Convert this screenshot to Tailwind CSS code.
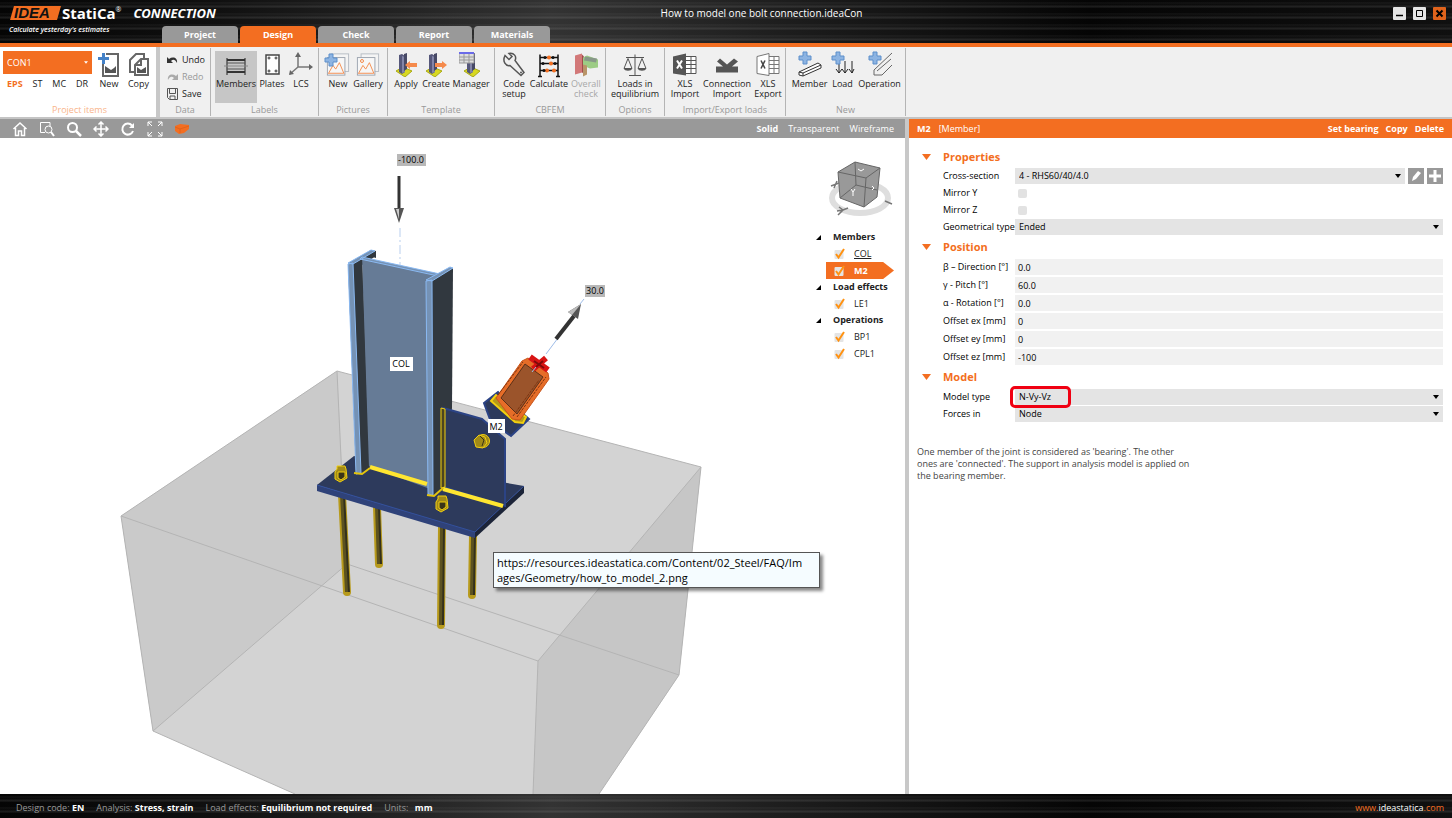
<!DOCTYPE html>
<html lang="en">
<head>
	<meta charset="UTF-8">
	<meta name="viewport" content="width=device-width, initial-scale=1.0">
	<title>How to model one bolt connection.ideaCon</title>
	<script src="https://cdn.jsdelivr.net/npm/@tailwindcss/browser@4"></script>
</head>
<body class="min-h-screen flex flex-col bg-white font-['Open_Sans','Noto_Sans',sans-serif] text-[9px] leading-3 text-[#222]">

<!-- shared icons -->
<svg class="hidden">
	<symbol id="plus" viewBox="0 0 14 14"><path d="M5 1h4v4h4v4H9v4H5V9H1V5h4z" fill="#8db4e2" stroke="#5c8fcb"/></symbol>
	<symbol id="tick" viewBox="0 0 12 12"><rect x="0.5" y="2" width="9" height="9" rx="1" fill="#e4e4e4"/><path d="M2 6l2.500 3.500L10 1" fill="none" stroke="#ff9212" stroke-width="2"/></symbol>
	<symbol id="caret" viewBox="0 0 6 4"><path d="M0 0h6L3 4z"/></symbol>
	<symbol id="column" viewBox="0 0 24 24"><path d="M2 18l7-4 9 4-7 6z" fill="#d8d820" stroke="#a8a818"/><path d="M5 2l3-1 3 2v16l-3 2-3-2z" fill="#55577a"/><path d="M8 3l3 1v15l-3 1z" fill="#8385a8"/><path d="M10 1l3-1v16l-3 2z" fill="#474966"/></symbol>
	<symbol id="picture" viewBox="0 0 26 26"><rect x="5.500" y="1.500" width="19" height="19" fill="#f4f4f4" stroke="#b4bac2"/><rect x="1.500" y="5.500" width="19" height="19" fill="#f7f7f7" stroke="#9aa2ae"/><path d="M2.500 23l5-9 3 4 4-7 5 12M3 22.500h16" fill="none" stroke="#f48a4a"/></symbol>
</svg>

<header class="h-[47px] shrink-0 flex border-b-4 border-[#f36e21] text-white bg-[#0c0c0c] bg-[repeating-linear-gradient(180deg,#0000_0px,#0000_2px,#ffffff12_3px,#0000_4px,#ffffff1c_7px,#0000_8px,#0000_11px),linear-gradient(90deg,#050505,#101010_15%,#333_38%,#1c1c1c_55%,#050505_75%,#101010)]">
	<div class="w-[162px] shrink-0 pl-[9px] pt-1">
		<div class="flex items-center h-[18px] whitespace-nowrap">
			<svg class="w-[53px] h-[18px] shrink-0" viewBox="0 0 53 18">
				<path d="M5 2h47l-4 14H1z" fill="#f36e21"/>
				<text x="5" y="14" font-family="Liberation Sans" font-size="15" font-weight="bold" font-style="italic" fill="#111">IDEA</text>
			</svg>
			<span class="text-[15px] font-bold">StatiCa</span><sup class="text-[7px]">®</sup>
			<span class="ml-3 text-[13px] font-bold italic">CONNECTION</span>
		</div>
		<div class="mt-0.5 text-[7px] font-semibold italic whitespace-nowrap">Calculate yesterday's estimates</div>
	</div>
	<div class="flex-1 flex flex-col">
		<div class="h-[26px] flex items-center pr-[6px]">
			<h1 class="flex-1 pr-8 text-center text-[10px]">How to model one bolt connection.ideaCon</h1>
			<div class="flex gap-[7px]">
				<button aria-label="Minimize" class="size-[13px] rounded-[1px] bg-[#e6e6e6]"><svg viewBox="0 0 13 13"><path d="M3 8.500h7" stroke="#000" stroke-width="1.500"/></svg></button>
				<button aria-label="Maximize" class="size-[13px] rounded-[1px] bg-[#e6e6e6]"><svg viewBox="0 0 13 13"><path d="M3.500 3.500h6v6h-6z" fill="none" stroke="#000"/></svg></button>
				<button aria-label="Close" class="size-[13px] rounded-[1px] bg-[#e0631c]"><svg viewBox="0 0 13 13"><path d="M3.500 3.500l6 6m0-6l-6 6" stroke="#000" stroke-width="2"/></svg></button>
			</div>
		</div>
		<nav class="flex gap-[2px] h-[17px] font-bold">
			<button class="w-[76px] rounded-t bg-[#999]">Project</button>
			<button class="w-[76px] rounded-t bg-[#f36e21]">Design</button>
			<button class="w-[76px] rounded-t bg-[#999]">Check</button>
			<button class="w-[76px] rounded-t bg-[#999]">Report</button>
			<button class="w-[76px] rounded-t bg-[#999]">Materials</button>
		</nav>
	</div>
</header>

<div class="h-[72px] shrink-0 flex bg-[#f0f0f0] border-b-2 border-[#c4c4c4] text-center">
	<!-- project items -->
	<section class="w-[160px] flex flex-col justify-between bg-white border-r-4 border-[#c8c8c8] pl-[3px] pt-1">
		<div class="flex">
			<div class="w-[89px]">
				<div class="relative">
					<select aria-label="Project item" class="appearance-none w-full h-[23px] pl-1 bg-[#f36e21] text-white"><option>CON1</option></select>
					<svg class="absolute right-1 top-2.5 w-1 h-[3px] fill-white pointer-events-none"><use href="#caret"/></svg>
				</div>
				<div class="flex justify-between pl-1 pr-1 mt-1">
					<button class="font-bold text-[#f36e21]">EPS</button><button>ST</button><button>MC</button><button>DR</button>
				</div>
			</div>
			<button class="w-[32px] flex flex-col items-center ml-px">
				<svg class="w-6 h-[27px]" viewBox="0 0 24 25"><path d="M9 2h12v22H6V12" fill="#fff" stroke="#666" stroke-width="2"/><path d="M8 14l3 2 3 2 3-2 2-2v7H8z" fill="#555"/><path d="M5 1h3v4h4v3H8v4H5V8H1V5h4z" fill="#4482c8"/></svg>
				New
			</button>
			<button class="w-[27px] flex flex-col items-center">
				<svg class="w-6 h-[27px]" viewBox="0 0 24 25"><path d="M3 8l6-6h8v18H3z" fill="#fff" stroke="#666" stroke-width="2"/><path d="M8 13l6-6h7v16H8z" fill="#fff" stroke="#666" stroke-width="2"/><path d="M14 7v6H8" fill="none" stroke="#666" stroke-width="2"/><path d="M10 15l4 3 5-3v6h-9z" fill="#555"/></svg>
				Copy
			</button>
		</div>
		<h2 class="text-[#f9b58c] pb-px">Project items</h2>
	</section>
	<section class="w-[51px] my-px flex flex-col justify-between border-r border-[#b4b4b4] pt-1.5">
		<div class="flex flex-col gap-[5px] pl-[7px]">
			<button class="flex items-center gap-[4px]"><svg class="w-[11px] h-3" viewBox="0 0 11 12"><path d="M0 3v6h6L4 7c2-2 4-2 6 2 1-5-4-7-8-4z" fill="#333"/></svg>Undo</button>
			<button disabled class="flex items-center gap-[4px] text-[#999]"><svg class="w-[11px] h-3" viewBox="0 0 11 12"><path d="M11 3v6H5l2-2C5 5 3 5 1 9 0 4 5 2 9 5z" fill="#aaa"/></svg>Redo</button>
			<button class="flex items-center gap-[4px]"><svg class="w-[11px] h-3" viewBox="0 0 11 12"><path d="M.5.5h10v11h-8l-2-2zM2.500.5v5h6v-5M3 11V8h5v3" fill="none" stroke="#555"/></svg>Save</button>
		</div>
		<h2 class="text-[#999]">Data</h2>
	</section>
	<section class="w-[108px] my-px flex flex-col justify-between border-r border-[#b4b4b4] pt-[3px]">
		<div class="flex pl-1">
			<button class="w-[42px] h-[52px] flex flex-col items-center bg-[#c6c6c6]">
				<svg class="w-6 h-[27px]" viewBox="0 0 24 27"><path d="M3 7v17M21 7v17" stroke="#555" stroke-width="1.500"/><path d="M3 9h18M3 21h18" stroke="#333" stroke-width="2"/><path d="M3 12h18M3 18h18" stroke="#555"/><path d="M0 15h24" stroke="#888"/></svg>
				Members
			</button>
			<button class="w-[30px] flex flex-col items-center">
				<svg class="w-6 h-[27px]" viewBox="0 0 24 27"><rect x="6" y="4" width="13" height="19" fill="#fff" stroke="#444" stroke-width="1.500"/><g fill="none" stroke="#333"><circle cx="9" cy="7" r="1"/><circle cx="16" cy="7" r="1"/><circle cx="9" cy="20" r="1"/><circle cx="16" cy="20" r="1"/></g></svg>
				Plates
			</button>
			<button class="w-[28px] flex flex-col items-center">
				<svg class="w-6 h-[27px]" viewBox="0 0 24 27"><path d="M9 3v13h13M9 16l-8 7" fill="none" stroke="#777" stroke-width="1.500"/><path d="M6 6l3-5 3 5zM20 13l4 3-4 3zM0 24l1-5 4 4z" fill="#666"/></svg>
				LCS
			</button>
		</div>
		<h2 class="text-[#999]">Labels</h2>
	</section>
	<section class="w-[69px] my-px flex flex-col justify-between border-r border-[#b4b4b4] pt-[3px]">
		<div class="flex justify-center">
			<button class="w-[30px] flex flex-col items-center"><span class="relative h-[27px]"><svg class="w-6 h-[27px]"><use href="#picture"/></svg><svg class="absolute -left-0.5 top-0.5 size-[14px]"><use href="#plus"/></svg></span>New</button>
			<button class="w-[30px] flex flex-col items-center"><svg class="w-6 h-[27px]"><use href="#picture"/><circle cx="6" cy="10" r="1.500" fill="none" stroke="#f48a4a"/></svg>Gallery</button>
		</div>
		<h2 class="text-[#999]">Pictures</h2>
	</section>
	<section class="w-[107px] my-px flex flex-col justify-between border-r border-[#b4b4b4] pt-[3px]">
		<div class="flex justify-center">
			<button class="w-[30px] flex flex-col items-center"><svg class="w-6 h-[27px]" viewBox="0 0 24 27"><use href="#column" y="2" width="24" height="24"/><path d="M11 14l5-4v2h7v4h-7v2z" fill="#f58a4c"/></svg>Apply</button>
			<button class="w-[30px] flex flex-col items-center"><svg class="w-6 h-[27px]" viewBox="0 0 24 27"><use href="#column" y="2" width="24" height="24"/><path d="M23 14l-5-4v2h-7v4h7v2z" fill="#f58a4c"/></svg>Create</button>
			<button class="w-[40px] flex flex-col items-center"><svg class="w-6 h-[27px]" viewBox="0 0 24 27"><use href="#column" x="3" y="2" width="24" height="24"/><path d="M0 2h15v10H0z" fill="#ddd" stroke="#999"/><path d="M5 2v10M10 2v10M0 6h15M0 9h15" stroke="#999"/><path d="M0 2h15" stroke="#6a6ae8" stroke-width="2"/></svg>Manager</button>
		</div>
		<h2 class="text-[#999]">Template</h2>
	</section>
	<section class="w-[111px] my-px flex flex-col justify-between border-r border-[#b4b4b4] pt-[3px]">
		<div class="flex justify-center pl-0.5 leading-[10px]">
			<button class="w-[32px] flex flex-col items-center"><svg class="w-6 h-[28px]" viewBox="0 0 24 27"><path d="M3 4l4 4 3-3-3-3c5-1 8 3 6 7l9 12-3 3L8 14c-4 1-8-4-5-10z" fill="none" stroke="#555" stroke-width="1.500"/><circle cx="19" cy="21" r="1" fill="#555"/></svg>Code<br>setup</button>
			<button class="w-[38px] flex flex-col items-center"><svg class="w-6 h-[28px]" viewBox="0 0 24 27"><path d="M3 3v22M21 3v22M1 25h4M19 25h4M3 6h18M3 12h18M3 19h18" fill="none" stroke="#111" stroke-width="1.500"/><g fill="#f36e21"><circle cx="12" cy="6" r="2"/><circle cx="14" cy="12" r="2"/><circle cx="10" cy="19" r="2"/><circle cx="17" cy="19" r="2"/></g><g fill="#111"><circle cx="8" cy="6" r="1.500"/><circle cx="16" cy="6" r="1.500"/><circle cx="6" cy="12" r="1.500"/><circle cx="18" cy="12" r="1.500"/><circle cx="7" cy="19" r="1.500"/></g></svg>Calculate</button>
			<button disabled class="w-[36px] flex flex-col items-center text-[#a8a8a8]"><svg class="w-6 h-[28px]" viewBox="0 0 24 27"><path d="M1 4l7-2v19l-7 2z" fill="#d27878"/><path d="M8 3l2 2v17l-2-1z" fill="#a04c4c"/><path d="M9 6l4-2 11 4v8l-8 1-7-3z" fill="#9ccc84"/><path d="M11 5l12 2-1 4-12-2z" fill="#889888"/><path d="M9 13l4 1v9l-4 2z" fill="#b89468"/></svg>Overall<br>check</button>
		</div>
		<h2 class="text-[#999]">CBFEM</h2>
	</section>
	<section class="w-[59px] my-px flex flex-col justify-between border-r border-[#b4b4b4] pt-[3px]">
		<div class="flex justify-center leading-[10px]">
			<button class="flex flex-col items-center"><svg class="w-6 h-[28px]" viewBox="0 0 24 27"><path d="M12 3v21M3 6h18M6 24h12M5 7L1 17h8zM19 7l-4 10h8z" fill="none" stroke="#555"/><path d="M1 17h8c0 3-8 3-8 0zM15 17h8c0 3-8 3-8 0z" fill="#555"/></svg>Loads in<br>equilibrium</button>
		</div>
		<h2 class="text-[#999]">Options</h2>
	</section>
	<section class="w-[121px] my-px flex flex-col justify-between border-r border-[#b4b4b4] pt-[3px]">
		<div class="flex justify-center pl-0.5 leading-[10px]">
			<button class="w-[30px] flex flex-col items-center"><svg class="w-6 h-[28px]" viewBox="0 0 24 27"><path d="M13 5h10v17H13M18 5v17M13 9h10M13 13h10M13 17h10" fill="#fff" stroke="#555"/><path d="M0 5l13-3v22L0 22z" fill="#555"/><path d="M4 9l5 8M9 9l-5 8" stroke="#fff" stroke-width="2"/></svg>XLS<br>Import</button>
			<button class="w-[54px] flex flex-col items-center"><svg class="w-6 h-[28px]" viewBox="0 0 24 27"><path d="M1 21v-6h7L2 10l3-3 7 6 7-6 4 3-6 5h6v6z" fill="#555"/></svg>Connection<br>Import</button>
			<button class="w-[28px] flex flex-col items-center"><svg class="w-6 h-[28px]" viewBox="0 0 24 27"><path d="M13 5h10v17H13M18 5v17M13 9h10M13 13h10M13 17h10" fill="#fff" stroke="#777"/><path d="M1 5l12-3v22L1 22z" fill="#fff" stroke="#777"/><path d="M5 9l4 8M9 9l-4 8" stroke="#444" stroke-width="1.500"/></svg>XLS<br>Export</button>
		</div>
		<h2 class="text-[#999]">Import/Export loads</h2>
	</section>
	<section class="w-[120px] my-px flex flex-col justify-between border-r border-[#b4b4b4] pt-[3px]">
		<div class="flex justify-center pl-0.5">
			<button class="w-[36px] flex flex-col items-center"><svg class="w-6 h-[27px]" viewBox="0 0 24 27"><path d="M1 21l19-9 3 2v3L5 25l-4-1zM1 21l4 1v3M5 22l18-8" fill="#fff" stroke="#333"/><use href="#plus" width="14" height="14"/></svg>Member</button>
			<button class="w-[30px] flex flex-col items-center"><svg class="w-6 h-[27px]" viewBox="0 0 24 27"><path d="M8 10v12M14 10v12M21 10v12M5 18l3 4 3-4M11 18l3 4 3-4M18 18l3 4 2-4" fill="none" stroke="#222"/><use href="#plus" width="14" height="14"/></svg>Load</button>
			<button class="w-[44px] flex flex-col items-center"><svg class="w-6 h-[27px]" viewBox="0 0 24 27"><path d="M24 2L6 19v5h8L24 14M23 8L9 20" fill="none" stroke="#666"/><use href="#plus" width="14" height="14"/></svg>Operation</button>
		</div>
		<h2 class="text-[#999]">New</h2>
	</section>
</div>

<main class="flex-1 flex">
	<div class="flex-[905] min-w-0 flex flex-col">
		<div class="h-[19px] flex items-center justify-between bg-[#999] text-white pl-3 pr-[11px]">
			<div class="flex gap-[11px]">
				<button aria-label="Home"><svg class="size-4" viewBox="0 0 16 16"><path d="M1.500 8L8 2l6.500 6M3.500 7v7.500h3V10h3v4.500h3V7" fill="none" stroke="#fff" stroke-width="1.500"/></svg></button>
				<button aria-label="Zoom window"><svg class="size-4" viewBox="0 0 16 16"><path d="M11 5V1.500H1.500v10H6" fill="none" stroke="#fff"/><circle cx="9.500" cy="8.500" r="3.500" fill="none" stroke="#fff"/><path d="M12 11l3 4" stroke="#fff" stroke-width="2"/></svg></button>
				<button aria-label="Zoom"><svg class="size-4" viewBox="0 0 16 16"><circle cx="6.500" cy="6.500" r="4.500" fill="none" stroke="#fff" stroke-width="2"/><path d="M10 10l5 5" stroke="#fff" stroke-width="2.500"/></svg></button>
				<button aria-label="Pan"><svg class="size-4" viewBox="0 0 16 16"><path d="M8 1v14M1 8h14M5.500 3.500L8 1l2.500 2.500M5.500 12.500L8 15l2.500-2.500M3.500 5.500L1 8l2.500 2.500M12.500 5.500L15 8l-2.500 2.500" fill="none" stroke="#fff" stroke-width="1.500"/></svg></button>
				<button aria-label="Rotate"><svg class="size-4" viewBox="0 0 16 16"><path d="M12 4.500A5.500 5.500 0 1 0 13 10" fill="none" stroke="#fff" stroke-width="2"/><path d="M14 2v5H9z" fill="#fff"/></svg></button>
				<button aria-label="Fit all"><svg class="size-4" viewBox="0 0 16 16"><path d="M1 5V1h4M1 1l4 4M11 1h4v4M15 1l-4 4M1 11v4h4M1 15l4-4M15 11v4h-4M15 15l-4-4" fill="none" stroke="#fff"/></svg></button>
				<button aria-label="Solid view"><svg class="size-4" viewBox="0 0 16 16"><path d="M1 5l5-2 9 1v4l-5 4-5 1-4-3z" fill="#f36e21"/><path d="M1 6l5 2 9-3M6 8v4" fill="none" stroke="#e0631c"/></svg></button>
			</div>
			<div class="flex gap-[10px]">
				<button class="font-bold">Solid</button><button>Transparent</button><button>Wireframe</button>
			</div>
		</div>
		<div class="relative flex-1 overflow-hidden">
			<!-- 3D scene -->
			<svg class="block w-full" viewBox="0 138 905 656" font-family="Open Sans, Noto Sans, sans-serif" font-size="9">
				<path d="M121 516L337 371 701 467 679 675 599 794H295L153 731z" fill="#d3d3d3"/>
				<path d="M121 516L337 371 347 564 153 731z" fill="#cacaca"/>
				<path d="M701 467L538 661 533 794h66l80-119z" fill="#c6c6c6"/>
				<path d="M121 516L337 371 701 467 538 661zM121 516L153 731 295 794M153 731L347 564 679 675M342 480L337 371M701 467L679 675 599 794M538 661L533 794" fill="none" stroke="#b4b4b4"/>
				<g stroke="#b79a1c" stroke-width="8" stroke-linecap="round"><path d="M342 494l5 98M377 507l2 57M442 527l-1 98M473 535l-1 60"/></g>
				<g stroke="#5c5220" stroke-width="4"><path d="M342 494l5 98M377 507l2 57M442 527l-1 98M473 535l-1 60"/></g>
				<g stroke="#33301c" stroke-width="2"><path d="M344 494l5 98M379 507l2 57M444 527l-1 98M475 535l-1 60"/></g>
				<!-- base plate -->
				<path d="M317 485L354 456 524 486 475 533z" fill="#2d3a5c"/>
				<path d="M317 485v6l158 47v-6z" fill="#2f4279"/>
				<path d="M524 486v7l-49 45v-6z" fill="#1c2438"/>
				<path d="M317 485l158 47 49-46" fill="none" stroke="#33509c"/>
				<!-- column -->
				<path d="M400 228v40" stroke="#b9cfee" stroke-dasharray="9 3 2 3"/>
				<path d="M348 264L371 250l5 1v5L362 265l8 202-10 6-4 0z" fill="#31383f"/>
				<path d="M362 258L440 274 430 489 368 466z" fill="#667b96"/>
				<path d="M353 264l9-6 7 209-8 5z" fill="#31383f"/>
				<path d="M370 256l6-4v6z" fill="#31383f"/>
				<path d="M348 264l5-1 8 210-5 1zM348 263l23-13 4 1-22 13zM362 257l78 17-2 2-78-17z" fill="#7592b5" stroke="#8ab9f2"/>
				<path d="M431 280l22-12-1 140-10 80-9 7z" fill="#31383f"/>
				<path d="M426 281l6-1 1 215-5-1zM426 280l24-13 3 1-21 13z" fill="#7592b5" stroke="#8ab9f2"/>
				<!-- fin plate -->
				<path d="M443 408l39 11 23 20v67l-62-19z" fill="#2d3a5c" stroke="#2b4385" stroke-width="2"/>
				<path d="M441 408v80l4-1v-78z" fill="#4b4520" stroke="#f2cf10"/>
				<path d="M370 467l57 17M443 489l60 17" stroke="#ffe631" stroke-width="4"/>
				<path d="M354 473l8 1 8-6M427 495l7 1 9-8" fill="none" stroke="#e4c40c" stroke-width="2"/>
				<!-- tilted member -->
				<path d="M484 403l14-11 31 27-18 17-20-14z" fill="#2d3a5c" stroke="#2b4385" stroke-width="2"/>
				<path d="M491 401l5-6 30 22-3 6-8-1z" fill="#b39a1b" stroke="#f2cf10" stroke-width="2"/>
				<path d="M496 398L522 361l6-3 20 15 1 6-29 41-8-1z" fill="#e66d28" stroke="#c9541b"/>
				<path d="M501 398l24-34 18 13-26 37z" fill="#9b542b" stroke="#5d3118"/>
				<path d="M517 417l29-40M513 416l26-36M498 395l25-33" stroke="#7d3410" stroke-dasharray="3 1"/>
				<path d="M530 357l18 13M546 358l-13 11" stroke="#d81414" stroke-width="6"/>
				<path d="M534 361l10 7M543 361l-7 6" stroke="#7c0b0b" stroke-width="2"/>
				<path d="M532 372l4-5M546 354l12-16M580 304l4-5" stroke="#9dbce8"/>
				<!-- bolts -->
				<g fill="#a18a18" stroke="#f2cf10">
					<path d="M335 472l2-3v-3h8l1 3 1 9-7 4-5-3zM436 502l2-3v-3h8l1 3 1 9-7 4-5-3z"/>
					<path d="M338 472h7v5l-4 3-3-2zM439 502h7v5l-4 3-3-2z" fill="#3a3418"/>
					<circle cx="483" cy="441" r="6.500"/><path d="M474 440l5-5 6 2 2 6-4 5-7-1z"/><path d="M480 436l4 4-2 6" fill="none" stroke="#3a3418"/>
				</g>
				<!-- load arrows -->
				<path d="M399 176v34" stroke="#333" stroke-width="3"/><path d="M394 208h10l-5 15z" fill="#555"/><path d="M396 209h3v10z" fill="#ccc"/>
				<path d="M556 339l18-23" stroke="#333" stroke-width="4"/><path d="M581 304l-3 15-10-7z" fill="#555"/><path d="M581 304l-9 11-4-3z" fill="#bbb"/>
				<path d="M397 154h29v12h-29zM585 285h20v12h-20z" fill="#b8b8b8"/>
				<path d="M390 357h23v14h-23zM488 419h17v14h-17z" fill="#fff"/>
				<g fill="#000" text-anchor="middle">
					<text x="411" y="163">-100.0</text><text x="595" y="294">30.0</text><text x="401" y="367">COL</text><text x="496" y="430">M2</text>
				</g>
			</svg>

			<!-- view cube -->
			<svg class="absolute right-3 top-5 w-[68px] h-[62px]" viewBox="0 0 68 62">
				<ellipse cx="35" cy="40" rx="28" ry="15" fill="none" stroke="#dedede" stroke-width="6"/>
				<path d="M13 14L30 4l25 6-3 29-13 10-24-9z" fill="#999" stroke="#666"/>
				<path d="M13 14l28 6 14-10M41 20l-2 29M30 4l1 23-16 13M31 27l21 5" fill="none" stroke="#666"/>
				<path d="M26 31l2 3 2-3M28 34v4M33 11l3 2 3-2M47 28l2 2-2 2" fill="none" stroke="#fff"/>
				<path d="M6 28l8-3M9 30l3-7M12 53l6-1 5-2M14 49l4 3-5 5M60 43l7 3" fill="none" stroke="#777" stroke-width="1.500"/>
			</svg>

			<!-- object tree -->
			<div class="absolute right-[11px] top-[91px] w-[78px]">
				<h3 class="flex items-center h-4 gap-3 font-bold"><svg class="size-[5px]" viewBox="0 0 5 5"><path d="M5 0v5H0z"/></svg>Members</h3>
				<a href="#col" class="flex items-center h-[17px] ml-[10px] pl-2 gap-2"><svg class="size-3"><use href="#tick"/></svg><span class="underline">COL</span></a>
				<a href="#m2" class="flex items-center h-[17px] ml-[10px] pl-2 gap-2 bg-[#f36e21] text-white font-bold [clip-path:polygon(0_0,84%_0,100%_50%,84%_100%,0_100%)]"><svg class="size-3"><use href="#tick"/></svg>M2</a>
				<h3 class="flex items-center h-4 gap-3 font-bold whitespace-nowrap"><svg class="size-[5px] shrink-0" viewBox="0 0 5 5"><path d="M5 0v5H0z"/></svg>Load effects</h3>
				<a href="#le1" class="flex items-center h-[17px] ml-[10px] pl-2 gap-2"><svg class="size-3"><use href="#tick"/></svg>LE1</a>
				<h3 class="flex items-center h-4 gap-3 font-bold"><svg class="size-[5px]" viewBox="0 0 5 5"><path d="M5 0v5H0z"/></svg>Operations</h3>
				<a href="#bp1" class="flex items-center h-[17px] ml-[10px] pl-2 gap-2"><svg class="size-3"><use href="#tick"/></svg>BP1</a>
				<a href="#cpl1" class="flex items-center h-[17px] ml-[10px] pl-2 gap-2"><svg class="size-3"><use href="#tick"/></svg>CPL1</a>
			</div>

			<div role="tooltip" class="absolute left-[493px] top-[414px] w-[327px] border border-[#555] bg-[#f5fcff] px-[3px] py-[2px] text-[11px] leading-[15px] text-black shadow-[3px_3px_3px_#0007]">https://resources.ideastatica.com/Content/02_Steel/FAQ/Im<br>ages/Geometry/how_to_model_2.png</div>
		</div>
	</div>

	<aside class="flex-[543] min-w-0 border-l-4 border-[#c8c8c8] text-black">
		<div class="h-[19px] flex items-center bg-[#f36e21] text-white px-2">
			<b>M2</b><span class="ml-2 flex-1">[Member]</span>
			<div class="flex gap-[7px] font-bold"><button>Set bearing</button><button>Copy</button><button>Delete</button></div>
		</div>
		<form class="pl-[13px] pr-[9px] pt-[11px]">
			<h2 class="flex items-center h-4 gap-3 text-[11px] font-bold text-[#f36e21]"><svg class="w-[9px] h-[6px] fill-[#f36e21]" viewBox="0 0 6 4"><use href="#caret"/></svg>Properties</h2>
			<div class="grid grid-cols-[72px_1fr] items-center gap-y-px pl-[21px] pt-[3px]">
				<label for="section">Cross-section</label>
				<div class="flex gap-[3px]">
					<div class="relative flex-1">
						<select id="section" class="appearance-none block w-full h-4 pl-1 bg-[#e4e4e4]"><option>4 - RHS60/40/4.0</option></select>
						<svg class="absolute right-1 top-1.5 w-[6px] h-1 pointer-events-none"><use href="#caret"/></svg>
					</div>
					<button type="button" aria-label="Edit" class="size-4 bg-[#999]"><svg viewBox="0 0 16 16"><path d="M4 13l1-4 5-6 3 2-5 6z" fill="#fff"/></svg></button>
					<button type="button" aria-label="Add" class="size-4 bg-[#999]"><svg viewBox="0 0 16 16"><path d="M8 2v12M2 8h12" stroke="#fff" stroke-width="3"/></svg></button>
				</div>
				<label for="mirrorY" class="leading-4">Mirror Y</label>
				<input id="mirrorY" type="checkbox" class="appearance-none size-[9px] ml-[3px] rounded-[2px] bg-[#e2e2e2]">
				<label for="mirrorZ" class="leading-4">Mirror Z</label>
				<input id="mirrorZ" type="checkbox" class="appearance-none size-[9px] ml-[3px] rounded-[2px] bg-[#e2e2e2]">
				<label for="geometry" class="whitespace-nowrap">Geometrical type</label>
				<div class="relative">
					<select id="geometry" class="appearance-none block w-full h-4 pl-1 bg-[#e4e4e4]"><option>Ended</option></select>
					<svg class="absolute right-1 top-1.5 w-[6px] h-1 pointer-events-none"><use href="#caret"/></svg>
				</div>
			</div>

			<h2 class="flex items-center h-4 mt-1 gap-3 text-[11px] font-bold text-[#f36e21]"><svg class="w-[9px] h-[6px] fill-[#f36e21]" viewBox="0 0 6 4"><use href="#caret"/></svg>Position</h2>
			<div class="grid grid-cols-[72px_1fr] items-center gap-y-[2px] pl-[21px] pt-1">
				<label for="beta">β – Direction [°]</label><input id="beta" value="0.0" class="h-4 pl-[3px] bg-[#f1f1f1]">
				<label for="gamma">γ - Pitch [°]</label><input id="gamma" value="60.0" class="h-4 pl-[3px] bg-[#f1f1f1]">
				<label for="alpha">α - Rotation [°]</label><input id="alpha" value="0.0" class="h-4 pl-[3px] bg-[#f1f1f1]">
				<label for="ex">Offset ex [mm]</label><input id="ex" value="0" class="h-4 pl-[3px] bg-[#f1f1f1]">
				<label for="ey">Offset ey [mm]</label><input id="ey" value="0" class="h-4 pl-[3px] bg-[#f1f1f1]">
				<label for="ez">Offset ez [mm]</label><input id="ez" value="-100" class="h-4 pl-[3px] bg-[#f1f1f1]">
			</div>

			<h2 class="flex items-center h-4 mt-1 gap-3 text-[11px] font-bold text-[#f36e21]"><svg class="w-[9px] h-[6px] fill-[#f36e21]" viewBox="0 0 6 4"><use href="#caret"/></svg>Model</h2>
			<div class="grid grid-cols-[72px_1fr] items-center gap-y-px pl-[21px] pt-1">
				<label for="model">Model type</label>
				<div class="relative">
					<select id="model" class="appearance-none block w-full h-4 pl-1 bg-[#e4e4e4]"><option>N-Vy-Vz</option></select>
					<svg class="absolute right-1 top-1.5 w-[6px] h-1 pointer-events-none"><use href="#caret"/></svg>
					<div class="absolute z-10 -left-[5px] -top-[3px] w-[61px] h-[22px] rounded-[5px] border-3 border-[#f00012] pointer-events-none"></div>
				</div>
				<label for="forces">Forces in</label>
				<div class="relative">
					<select id="forces" class="appearance-none block w-full h-4 pl-1 bg-[#e4e4e4]"><option>Node</option></select>
					<svg class="absolute right-1 top-1.5 w-[6px] h-1 pointer-events-none"><use href="#caret"/></svg>
				</div>
			</div>
		</form>
		<p class="mt-6 ml-2 max-w-[276px] leading-3 text-[#444]">One member of the joint is considered as 'bearing'. The other ones are 'connected'. The support in analysis model is applied on the bearing member.</p>
	</aside>
</main>

<footer class="h-6 shrink-0 flex items-center justify-between px-2 pl-4 pt-1 text-[#999] bg-[#0c0c0c] bg-[repeating-linear-gradient(180deg,#0000_0px,#0000_2px,#ffffff12_3px,#0000_4px,#ffffff1c_7px,#0000_8px,#0000_11px),linear-gradient(90deg,#050505,#101010_15%,#333_38%,#1c1c1c_55%,#050505_75%,#101010)]">
	<div class="flex gap-3">
		<span>Design code: <b class="text-white">EN</b></span>
		<span>Analysis: <b class="text-white">Stress, strain</b></span>
		<span>Load effects: <b class="text-white">Equilibrium not required</b></span>
		<span>Units: <b class="text-white ml-1">mm</b></span>
	</div>
	<a href="#" class="text-[#f36e21]">www.<span class="text-white">ideastatica</span>.com</a>
</footer>
</body>
</html>
